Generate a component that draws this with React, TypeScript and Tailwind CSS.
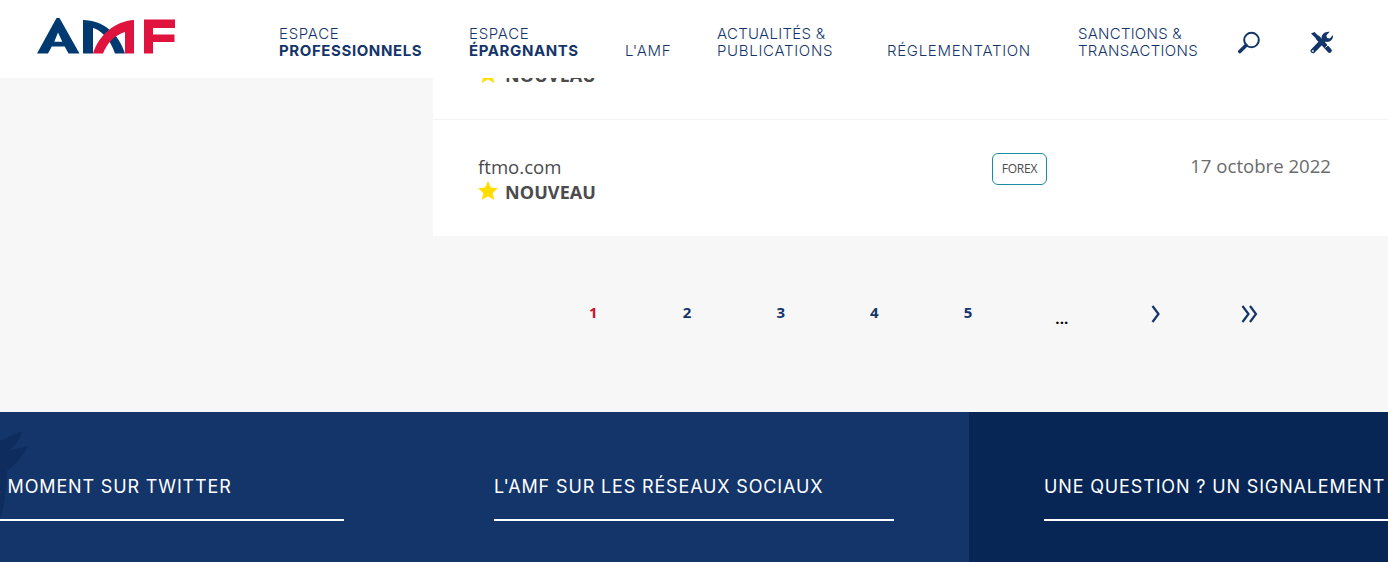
const navFont = { fontFamily: 'Inter, "Noto Sans", sans-serif' };

function Logo() {
  return (
    <svg width="140" height="38" viewBox="0 0 140 38" className="block">
      {/* A */}
      <path fillRule="evenodd" fill="#003a70" d="M0 35.500 19.500 0h3L42.500 35.500H31.500l-3.800-7H14.800l-3.800 7zM17.300 23.800h8L21 14.500z" />
      {/* M left + arc */}
      <path fill="#003a70" d="M46 2c20 0 36 14 42 33.500H78C73 20 62 11 56 10v25.500H46z" />
      {/* M red arc + stem */}
      <path fill="#e0123e" d="M97 2v33.500H88V14C78 17 70 25 66 35.500H56C62 17 78 3 97 2z" />
      {/* F */}
      <path fill="#e0123e" d="M107 1.500h31v8.500h-22v6.500h21.500v7.500h-21.500v11.500h-9z" />
    </svg>
  );
}

function NavItem({ top, bottom, bold, width, topClass, bottomClass }: { top?: string; bottom: string; bold?: boolean; width: string; topClass?: string; bottomClass?: string }) {
  return (
    <a className={`${width} block shrink-0 text-[15px] leading-[17px] text-[#14356a] tracking-[0.7px] font-light`} style={navFont}>
      {top && <div className={`whitespace-nowrap ${topClass ?? ''}`}>{top}</div>}
      <div className={`whitespace-nowrap ${bold ? 'font-bold tracking-[0.6px]' : ''} ${bottomClass ?? ''}`}>{bottom}</div>
    </a>
  );
}

function Row({ className }: { className?: string }) {
  return (
    <div className={`flex pl-[45px] pr-[57px] pt-[33px] ${className ?? ''}`}>
      <div className="flex-1">
        <div className="text-[18.600px] leading-[28px] text-[#4b4b4b]">ftmo.com</div>
        <div className="flex items-center gap-[7px] text-[18px] leading-[23px] font-bold text-[#4b4b4b]">
          <svg width="20" height="19" viewBox="0 0 24 23" className="mb-1">
            <path fill="#ffdd00" d="M12 0l3.500 8 8.500.8-6.400 5.600L19.500 23 12 18.500 4.500 23l1.900-8.600L0 8.800 8.500 8z" />
          </svg>
          <span className="tracking-[0.1px]">NOUVEAU</span>
        </div>
      </div>
      <div className="w-[55px] h-[32px] border border-[#1a8ba0] rounded-[6px] flex items-center justify-center text-[12px] tracking-[-0.2px] text-[#4b4b4b]">FOREX</div>
      <div className="w-[284px] text-right text-[18.600px] leading-[25px] text-[#6b6b6b]">17 octobre 2022</div>
    </div>
  );
}

function FooterCol({ title, dark }: { title: string; dark?: boolean }) {
  return (
    <div className={`w-[550px] shrink-0 pl-[75px] pr-[75px] pt-[62px] ${dark ? 'bg-[#072655]' : ''}`}>
      <div className="h-[47px] border-b-2 border-white text-[18px] leading-[26px] text-white font-normal whitespace-nowrap tracking-[0.85px]" style={navFont}>{title}</div>
    </div>
  );
}

export default function App() {
  const pages = ['1', '2', '3', '4', '5'];
  return (
    <div className="h-[562px] w-[1388px] overflow-hidden bg-[#f7f7f7]" style={{ fontFamily: '"Open Sans", sans-serif' }}>
      <header className="relative z-10 h-[78px] bg-white flex">
        <div className="w-[279px] shrink-0 pl-[37px] pt-[18px]">
          <Logo />
        </div>
        <nav className="flex pt-[25px]">
          <NavItem top="ESPACE" bottom="PROFESSIONNELS" bold width="w-[190px]" />
          <NavItem top="ESPACE" bottom="ÉPARGNANTS" bold width="w-[156px]" />
          <div className="w-[92px] shrink-0 pt-[17px]"><NavItem bottom="L'AMF" width="w-[92px]" /></div>
          <NavItem top="ACTUALITÉS &" bottom="PUBLICATIONS" width="w-[170px]" topClass="tracking-[0.3px]" />
          <div className="w-[191px] shrink-0 pt-[17px]"><NavItem bottom="RÉGLEMENTATION" width="w-[191px]" /></div>
          <NavItem top="SANCTIONS &" bottom="TRANSACTIONS" width="w-[160px]" topClass="tracking-[0.25px]" bottomClass="tracking-[0.3px]" />
        </nav>
        <div className="flex pt-[30px] gap-[49px]">
          <svg width="23" height="24" viewBox="0 0 23 24" className="block">
            <circle cx="13.500" cy="10" r="7.300" fill="none" stroke="#14356a" strokeWidth="2" />
            <path d="M8 15.500 1.800 21.500" stroke="#14356a" strokeWidth="3.600" strokeLinecap="round" />
          </svg>
          <svg width="24" height="24" viewBox="0 0 24 24" className="block">
            <path d="M1 3.500 4.500 2 11 8.500 8.500 11z" fill="#14356a" />
            <path d="M8 8 19.500 20.500" stroke="#14356a" strokeWidth="4.600" strokeLinecap="round" />
            <path d="M15.500 17.500 18.500 14.500" stroke="#ffffff" strokeWidth="1" />
            <path d="M3 20.800 14 9.500" stroke="#14356a" strokeWidth="4.800" strokeLinecap="round" />
            <circle cx="2.900" cy="20.900" r=".9" fill="#ffffff" />
            <path d="M11.500 8C11.500 4 15.500 1 19.800 1.800l-3.400 3.400.6 2.700 2.700.6L23 5c.4 4.500-2.800 7.500-7.400 6.800z" fill="#14356a" />
          </svg>
        </div>
      </header>

      <main className="flex -mt-[75px]">
        <div className="w-[433px] shrink-0" />
        <div className="flex-1">
          <div className="bg-white">
            <Row className="h-[117px] border-b border-[#f3f3f3]" />
            <Row className="h-[116px]" />
          </div>
          <div className="h-[176px] pl-[113.500px] pt-[66px] flex items-start">
            {pages.map((p) => (
              <span key={p} className={`w-[93.700px] text-center text-[15px] leading-[20px] font-bold ${p === '1' ? 'text-[#d0112b]' : 'text-[#14356a]'}`}>{p}</span>
            ))}
            <span className="w-[93.700px] text-center text-[15px] leading-[20px] font-bold text-black pt-[6px]">...</span>
            <span className="w-[93.700px] flex justify-center">
              <svg width="12" height="20" viewBox="0 0 12 20" className="ml-[1px] mt-[2px]">
                <path d="M2.500 2 8.500 10 2.500 18" fill="none" stroke="#14356a" strokeWidth="2.200" />
              </svg>
            </span>
            <span className="w-[93.700px] flex justify-center">
              <svg width="20" height="20" viewBox="0 0 20 20" className="ml-[1px] mt-[2px]">
                <path d="M2.500 2 8.500 10 2.500 18M10 2 16 10 10 18" fill="none" stroke="#14356a" strokeWidth="2.200" />
              </svg>
            </span>
          </div>
        </div>
      </main>

      <footer className="relative h-[150px] overflow-hidden bg-[#14356a]">
        <svg width="30" height="100" viewBox="0 0 30 100" className="absolute left-0 top-[16px]">
          <path fill="#0e2c5e" d="M0 13 22 3c-2 9-7 15-14 20l20-5C22 30 14 38 7 43 7 60 4 78 0 92z" />
        </svg>
        <div className="relative flex -ml-[131px] w-[1669px]">
          <FooterCol title="EN CE MOMENT SUR TWITTER" />
          <FooterCol title="L'AMF SUR LES RÉSEAUX SOCIAUX" />
          <div className="h-[150px] flex-1 bg-[#072655]">
            <FooterCol title="UNE QUESTION ? UN SIGNALEMENT ?" dark />
          </div>
        </div>
      </footer>
    </div>
  );
}
